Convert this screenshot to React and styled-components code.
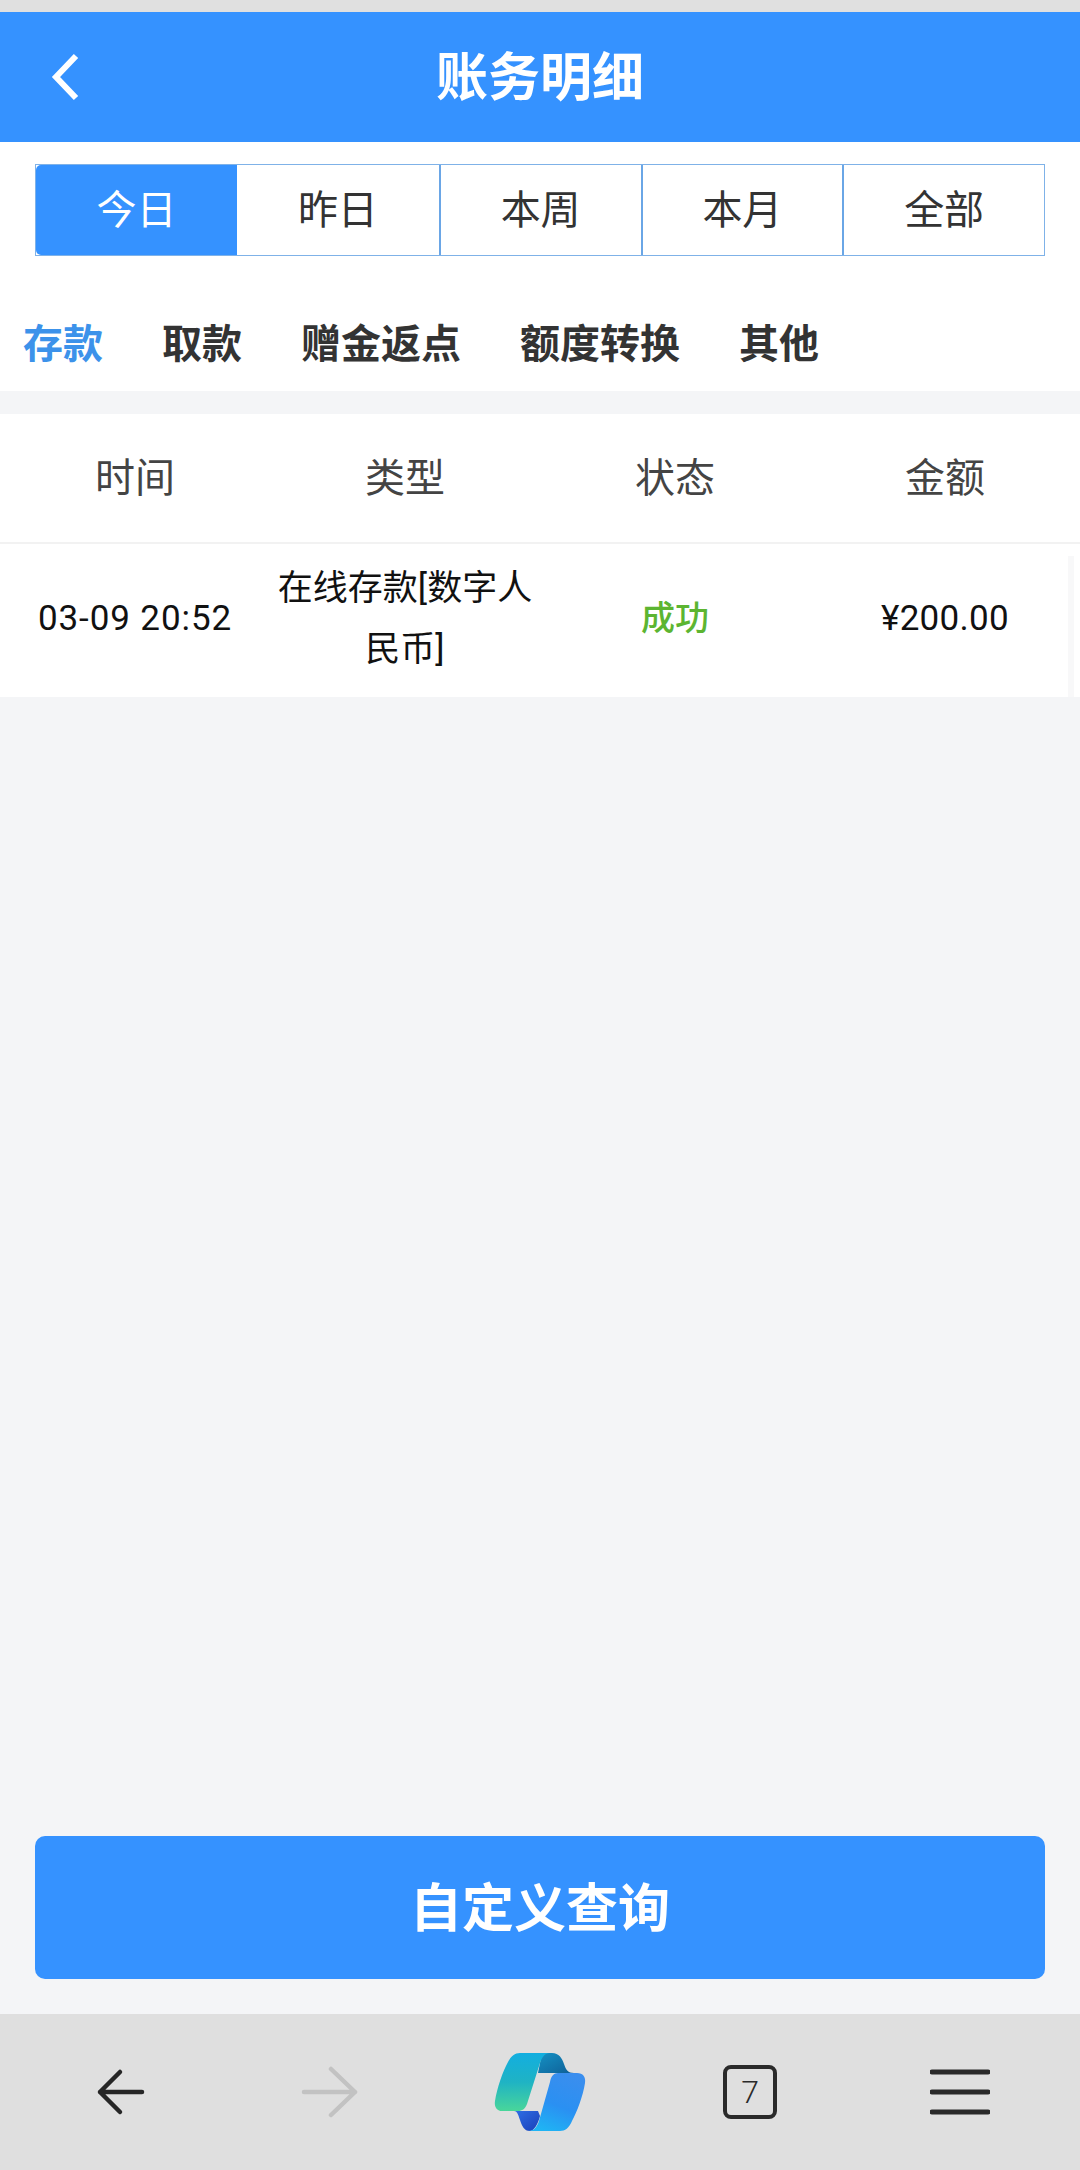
import React from 'react';
import styled, { createGlobalStyle } from 'styled-components';

const GlobalStyle = createGlobalStyle`
  html, body {
    margin: 0;
    padding: 0;
    background: #f4f5f7;
  }
  * {
    box-sizing: border-box;
  }
`;

const Page = styled.div`
  display: flex;
  flex-direction: column;
  width: 1080px;
  height: 2170px;
  overflow: hidden;
  background: #f4f5f7;
  font-family: Roboto, "Noto Sans CJK SC", sans-serif;
  color: #333;
`;

const StatusStrip = styled.div`
  flex: none;
  height: 12px;
  background: #e0e0e0;
`;

const Header = styled.header`
  flex: none;
  display: flex;
  align-items: center;
  justify-content: center;
  position: relative;
  height: 130px;
  padding-bottom: 7px;
  background: #3592ff;
  color: #fff;
  font-size: 52px;
  font-weight: 700;
`;

const BackLink = styled.a`
  position: absolute;
  left: 48px;
  top: 40px;
  display: block;
  width: 36px;
  height: 50px;
`;

const FilterPanel = styled.section`
  flex: none;
  background: #fff;
  padding-top: 22px;
`;

const RangeTabs = styled.div`
  display: grid;
  grid-template-columns: 201px repeat(4, 1fr);
  height: 92px;
  margin: 0 35px;
  border: 1px solid #7fb2e8;
`;

const RangeTab = styled.div`
  display: flex;
  align-items: center;
  justify-content: center;
  padding-bottom: 6px;
  font-size: 40px;
  color: ${p => (p.$active ? '#fff' : '#333')};
  background: ${p => (p.$active ? '#3592ff' : '#fff')};
  border-left: ${p => (p.$divided ? '2px solid #6aa6e6' : 'none')};
  border-radius: ${p => (p.$active ? '5px 0 0 5px' : '0')};
`;

const TypeTabs = styled.div`
  display: flex;
  gap: 59px;
  padding: 65px 0 22px 23px;
`;

const TypeTab = styled.div`
  font-size: 40px;
  line-height: 48px;
  font-weight: 700;
  color: ${p => (p.$active ? '#3c92ea' : '#333')};
`;

const Records = styled.section`
  flex: none;
  margin-top: 23px;
  background: #fff;
`;

const HeadRow = styled.div`
  display: grid;
  grid-template-columns: repeat(4, 1fr);
  align-items: center;
  height: 130px;
  padding-bottom: 7px;
  border-bottom: 2px solid #f2f2f2;
  font-size: 40px;
  text-align: center;
  color: #444;
`;

const DataRow = styled.div`
  position: relative;
  display: grid;
  grid-template-columns: repeat(4, 1fr);
  align-items: center;
  height: 153px;
  padding-bottom: 4px;
  font-size: 35px;
  line-height: 61px;
  text-align: center;
  color: #111;
`;

const Cell = styled.div`
  letter-spacing: ${p => p.$spacing || 0}px;
`;

const StatusCell = styled.div`
  font-size: 34px;
  font-weight: 500;
  color: #5cb531;
`;

// faint overlay scrollbar along the row's right side
const ScrollThumb = styled.div`
  position: absolute;
  right: 6px;
  top: 12px;
  bottom: 0;
  width: 6px;
  background: #f8f8f9;
`;

const QueryArea = styled.div`
  flex: 1;
  display: flex;
  align-items: flex-end;
  padding: 0 35px 35px;
`;

const QueryButton = styled.button`
  width: 100%;
  height: 143px;
  padding: 0 0 7px;
  border: none;
  border-radius: 10px;
  background: #3592ff;
  color: #fff;
  font-family: inherit;
  font-size: 52px;
  font-weight: 700;
`;

const BrowserBar = styled.nav`
  flex: none;
  display: grid;
  grid-template-columns: repeat(5, 210px);
  align-items: center;
  justify-items: center;
  height: 156px;
  padding: 0 15px;
  background: #dfdfdf;
`;

const TabCount = styled.div`
  display: flex;
  align-items: center;
  justify-content: center;
  width: 54px;
  height: 54px;
  border: 4px solid #2a2a2a;
  border-radius: 8px;
  font-size: 32px;
  font-weight: 300;
  color: #2a2a2a;
`;

const ranges = ['今日', '昨日', '本周', '本月', '全部'];
const types = ['存款', '取款', '赠金返点', '额度转换', '其他'];
const columns = ['时间', '类型', '状态', '金额'];

function Chevron() {
  return (
    <svg width="36" height="50" viewBox="0 0 36 50" fill="none">
      <path d="M28 4 L8 25 L28 46" stroke="#fff" strokeWidth="6" strokeLinecap="butt" />
    </svg>
  );
}

function ArrowLeft() {
  return (
    <svg width="50" height="48" viewBox="0 0 50 48" fill="none">
      <path d="M5 24 H47 M25 4 L5 24 L25 44" stroke="#262626" strokeWidth="4.5" strokeLinecap="round" strokeLinejoin="round" />
    </svg>
  );
}

function ArrowRight() {
  return (
    <svg width="58" height="52" viewBox="0 0 58 52" fill="none">
      <path d="M3 26 H54 M30 3 L54 26 L30 49" stroke="#c2c2c2" strokeWidth="4.5" strokeLinecap="round" strokeLinejoin="round" />
    </svg>
  );
}

function MenuIcon() {
  return (
    <svg width="60" height="48" viewBox="0 0 60 48" fill="none">
      <path d="M2 4 H58 M2 24 H58 M2 44 H58" stroke="#2a2a2a" strokeWidth="5" strokeLinecap="round" />
    </svg>
  );
}

// Copilot mark: two blades joined by darker ribbons
function CopilotLogo() {
  return (
    <svg width="92" height="80" viewBox="24 22 92 80">
      <defs>
        <linearGradient id="leftBlade" x1="0" y1="0" x2="0" y2="1">
          <stop offset="0" stopColor="#12aee0" />
          <stop offset="0.5" stopColor="#1fb3c4" />
          <stop offset="1" stopColor="#49d69a" />
        </linearGradient>
        <linearGradient id="rightBlade" x1="0.7" y1="0" x2="0.3" y2="1">
          <stop offset="0" stopColor="#3a8eee" />
          <stop offset="0.55" stopColor="#2a90f2" />
          <stop offset="1" stopColor="#1fb4f4" />
        </linearGradient>
        <linearGradient id="topRibbon" x1="0" y1="0" x2="1" y2="1">
          <stop offset="0" stopColor="#1491c4" />
          <stop offset="1" stopColor="#0f5f96" />
        </linearGradient>
        <linearGradient id="bottomRibbon" x1="0" y1="0" x2="1" y2="1">
          <stop offset="0" stopColor="#2f6fe6" />
          <stop offset="1" stopColor="#1a3fb8" />
        </linearGradient>
      </defs>
      <path d="M72 23 H82 C89 23 92 28 94 34 C96 40 98 43 104 43 H68 Z" fill="url(#topRibbon)" />
      <path d="M44 81 H68 L70 86 C68 94 64 101 60 101 C54 101 52 96 50 90 C48 84 47 81 44 81 Z" fill="url(#bottomRibbon)" />
      <path d="M50 23 H80 C75 23 72 27 70 33 L57 74 C55 79 52 81 48 81 H32 C27 81 24 77 25 71 C27 58 33 41 38 32 C41 26 45 23 50 23 Z" fill="url(#leftBlade)" />
      <path d="M88 43 H107 C113 43 116 47 115 53 C113 66 107 82 102 91 C99 98 95 101 90 101 H58 C64 101 67 97 69 91 L80 52 C81 46 84 43 88 43 Z" fill="url(#rightBlade)" />
    </svg>
  );
}

export default function App() {
  return (
    <>
      <GlobalStyle />
      <Page>
        <StatusStrip />
        <Header>
          <BackLink>
            <Chevron />
          </BackLink>
          账务明细
        </Header>

        <FilterPanel>
          <RangeTabs>
            {ranges.map((label, i) => (
              <RangeTab key={label} $active={i === 0} $divided={i > 1}>
                {label}
              </RangeTab>
            ))}
          </RangeTabs>
          <TypeTabs>
            {types.map((label, i) => (
              <TypeTab key={label} $active={i === 0}>
                {label}
              </TypeTab>
            ))}
          </TypeTabs>
        </FilterPanel>

        <Records>
          <HeadRow>
            {columns.map(label => (
              <div key={label}>{label}</div>
            ))}
          </HeadRow>
          <DataRow>
            <Cell $spacing={0.9}>03-09 20:52</Cell>
            <Cell>在线存款[数字人民币]</Cell>
            <StatusCell>成功</StatusCell>
            <Cell $spacing={0.3}>¥200.00</Cell>
            <ScrollThumb />
          </DataRow>
        </Records>

        <QueryArea>
          <QueryButton>自定义查询</QueryButton>
        </QueryArea>

        <BrowserBar>
          <ArrowLeft />
          <ArrowRight />
          <CopilotLogo />
          <TabCount>7</TabCount>
          <MenuIcon />
        </BrowserBar>
      </Page>
    </>
  );
}
